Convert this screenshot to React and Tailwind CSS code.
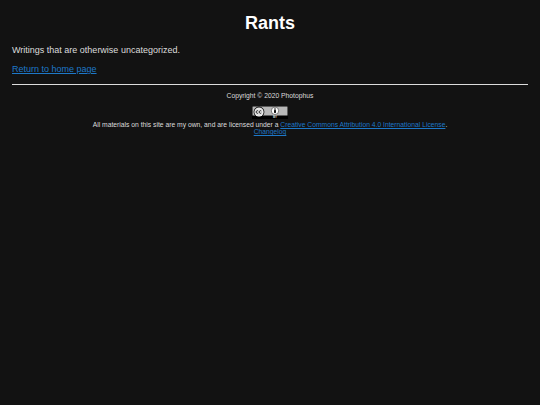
function CcBadge() {
  return (
    <svg width="36" height="13" viewBox="0 0 36 13" className="block">
      <rect width="36" height="13" fill="#000" />
      <rect x="0.5" y="0.5" width="35" height="9" fill="#b8b8b8" />
      <circle cx="7" cy="6" r="5.4" fill="#000" />
      <circle cx="7" cy="6" r="4.6" fill="#fff" />
      <circle cx="7" cy="6" r="3.9" fill="#111" fillOpacity="0.12" />
      <path d="M6.2 5a1.3 1.3 0 1 0 0 2M9.3 5a1.3 1.3 0 1 0 0 2" fill="none" stroke="#000" strokeWidth="0.8" />
      <circle cx="23" cy="4.8" r="3.7" fill="#fff" stroke="#333" strokeWidth="0.6" />
      <circle cx="23" cy="3.1" r="0.8" fill="#111" />
      <rect x="22" y="4.1" width="2" height="2.8" fill="#111" />
      <text x="23" y="12.4" fontSize="3" fontWeight="700" textAnchor="middle" fill="#ddd">BY</text>
    </svg>
  );
}

export default function App() {
  return (
    <div className="min-h-screen bg-[#121212] px-3 font-['Liberation_Sans',Arial,sans-serif] text-[#dcdcdc]">
      <h1 className="pt-[12px] text-center text-[18px] leading-[23px] font-bold text-white">Rants</h1>
      <p className="mt-[9px] text-[9px] leading-[12px]">Writings that are otherwise uncategorized.</p>
      <p className="mt-[7px] text-[9px] leading-[12px]">
        <a href="#" className="text-[#1e78c8] underline">Return to home page</a>
      </p>
      <hr className="mt-[9px] border-t border-[#dcdcdc]" />
      <footer className="pt-[7px] text-center text-[6.75px] leading-[7.5px]">
        <p>Copyright © 2020 Photophus</p>
        <div className="mt-[6px] flex justify-center">
          <CcBadge />
        </div>
        <p className="mt-[2px]">
          All materials on this site are my own, and are licensed under a{" "}
          <a href="#" className="text-[#1e78c8] underline">Creative Commons Attribution 4.0 International License</a>.
        </p>
        <p>
          <a href="#" className="text-[#1e78c8] underline">Changelog</a>
        </p>
      </footer>
    </div>
  );
}
